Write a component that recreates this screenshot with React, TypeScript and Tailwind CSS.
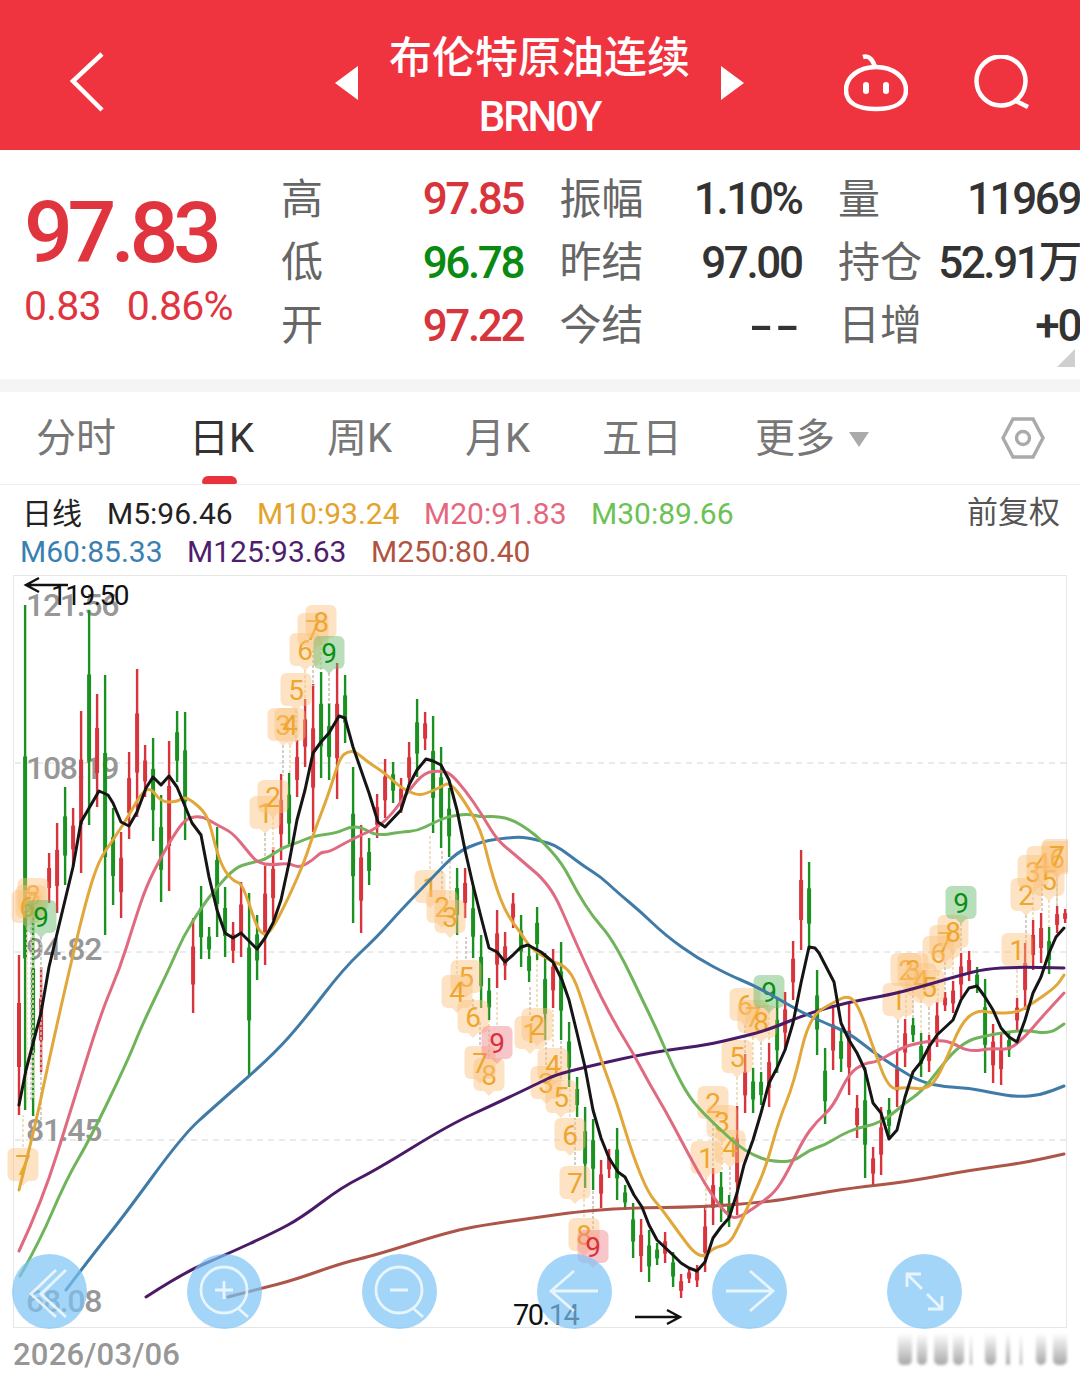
const raw = `g605-1110 g905-1116 r967-1072 r853-903 r823-913 g787-885 r808-867 r711-873 g610-825 r694-807 g675-935 g808-905 r832-918 r752-839 r669-817 r745-797 g738-841 g795-902 r741-891 g711-782 g712-840 r918-1013 g886-959 g927-959 g827-937 g887-957 r922-963 r882-957 g893-1075 g915-980 r863-965 r847-920 r774-860 g773-845 r740-797 r699-767 r684-832 g672-778 g703-780 r663-799 g675-743 g767-923 r825-933 g838-885 r794-838 r759-818 g762-803 r778-813 r742-793 g699-777 r712-750 g716-833 g747-848 g788-857 g868-935 r868-918 g887-958 g935-1008 g978-1020 r910-988 r932-980 r893-928 g915-967 g945-982 g907-960 g953-1040 r949-1008 g942-1040 g1022-1087 g1077-1117 g1107-1188 g1119-1190 r1160-1208 r1149-1178 g1128-1200 g1185-1210 g1203-1258 r1219-1272 g1230-1282 g1243-1265 r1232-1263 g1252-1287 r1274-1298 r1268-1283 r1265-1287 r1207-1272 r1168-1225 g1172-1222 g1195-1227 r1106-1215 r1054-1113 g1068-1113 g1072-1105 r1043-1107 g997-1073 r992-1050 r941-1000 r850-950 g862-950 g970-1055 g1048-1124 r1005-1070 g1028-1072 r1003-1095 r1095-1138 g1067-1178 r1147-1185 r1107-1175 g1098-1138 r1052-1107 r1019-1067 g1018-1042 g1033-1077 r1035-1072 r1002-1047 r992-1011 r981-1013 r953-998 r951-981 g967-993 g979-1073 r1024-1083 r1032-1085 g1033-1057 r998-1030 r943-1010 r920-970 r913-963 g927-974 r906-933 r909-923`;

const candles = raw.split(" ").map((s, i) => {
  const [a, b] = s.slice(1).split("-").map(Number);
  return { x: 24.1 + i * 8, up: s[0] === "r", top: a, bottom: b };
});
candles.unshift({ x: 18, up: true, top: 955, bottom: 1115 });

const lines: { color: string; d: string }[] = [
  { color: "#ac5548", d: "227,1297 262,1288 293,1280 341,1263 375,1255 444,1233 482,1225 540,1217 574,1212 624,1208 702,1207 767,1202 808,1195 850,1188 905,1182 970,1170 1022,1163 1063,1154" },
  { color: "#4a1a66", d: "145,1297 182,1273 224,1255 272,1233 300,1218 341,1187 375,1170 448,1125 496,1103 540,1082 554,1075 585,1067 633,1056 667,1050 705,1045 736,1038 767,1030 808,1013 848,1002 888,995 919,987 960,975 984,969 1016,967 1063,968" },
  { color: "#3f7ba6", d: "65,1290 93,1253 122,1217 182,1135 213,1107 272,1055 303,1020 343,968 376,937 400,910 432,877 456,852 480,842 496,839 516,837 528,838 540,841 554,845 568,855 584,867 600,877 616,892 640,912 664,935 696,958 728,975 752,985 776,998 800,1012 824,1023 848,1033 872,1052 896,1068 920,1082 944,1087 968,1088 992,1093 1016,1097 1040,1095 1063,1086" },
  { color: "#6fb45a", d: "19,1276 38,1243 65,1180 90,1137 127,1060 141,1025 169,967 182,937 200,908 216,887 234,868 248,863 264,860 280,848 296,843 312,836 336,833 348,827 360,827 376,836 400,832 416,831 432,823 448,816 468,814 480,817 496,816 512,820 528,830 540,840 561,863 576,892 592,917 608,935 624,963 640,997 656,1030 672,1067 688,1097 704,1115 720,1130 736,1145 752,1155 768,1161 792,1162 808,1150 824,1145 840,1135 856,1128 872,1125 888,1117 904,1103 920,1092 936,1072 952,1052 968,1040 984,1036 1000,1033 1024,1030 1048,1034 1063,1024" },
  { color: "#e06a80", d: "18,1251 41,1202 72,1103 100,1013 119,968 133,923 145,887 160,857 176,830 186,818 201,816 216,825 232,833 248,853 257,863 272,865 288,863 298,868 312,860 320,852 328,852 344,843 360,835 376,828 392,813 408,790 424,772 440,771 449,773 464,790 480,813 496,840 512,853 528,867 540,877 554,895 568,927 584,963 600,997 616,1027 632,1053 648,1083 664,1110 680,1140 696,1170 712,1197 728,1217 738,1218 760,1203 774,1192 786,1173 802,1140 815,1122 832,1107 848,1073 864,1063 876,1062 896,1050 912,1044 936,1040 950,1042 968,1052 992,1048 1008,1050 1024,1037 1040,1018 1063,993" },
  { color: "#e2a73a", d: "18,1190 34,1127 48,1060 69,967 86,897 98,860 112,840 127,817 141,792 150,788 160,802 176,802 184,796 200,808 208,820 216,853 224,872 234,882 240,883 248,903 256,928 264,936 272,928 288,897 304,860 312,835 328,793 339,757 348,751 355,752 368,763 384,773 400,788 416,795 424,794 440,787 449,782 464,802 480,830 488,863 496,890 504,910 512,923 520,933 527,945 540,955 552,962 562,965 573,977 584,1010 600,1060 616,1103 631,1153 647,1193 660,1208 678,1233 693,1253 704,1257 712,1248 728,1244 736,1230 750,1200 764,1170 778,1120 793,1083 808,1017 833,1002 848,995 858,1007 872,1047 888,1090 904,1087 929,1090 944,1063 960,1023 976,1010 992,1013 1016,1013 1032,1003 1055,987 1063,975" },
  { color: "#151515", d: "18,1105 25,1070 40,1013 48,967 72,867 80,822 98,791 107,795 112,803 120,822 128,826 136,812 145,788 152,777 160,785 168,776 176,787 191,823 200,835 208,877 216,910 224,933 232,938 240,933 256,949 264,938 272,923 280,900 288,863 296,820 304,790 312,753 320,742 328,733 338,716 344,718 352,747 360,770 368,793 377,822 384,827 400,810 408,785 416,770 425,759 432,761 440,765 448,780 456,810 464,850 472,885 480,917 488,948 496,952 504,962 512,955 520,947 527,945 540,952 552,962 561,980 568,1000 576,1033 584,1067 592,1110 600,1138 608,1158 617,1172 624,1177 633,1195 641,1207 648,1225 656,1240 672,1255 680,1263 688,1268 696,1271 704,1262 712,1238 720,1227 728,1218 736,1193 743,1165 752,1140 760,1113 768,1083 776,1068 784,1050 792,1023 800,983 808,947 814,948 818,953 833,982 840,1023 848,1040 856,1053 864,1070 872,1103 880,1113 888,1139 896,1130 904,1097 912,1072 920,1062 928,1047 936,1035 952,1020 960,1000 968,988 976,986 984,997 992,1010 1000,1028 1008,1037 1016,1042 1024,1020 1032,993 1040,977 1048,953 1055,937 1063,928" },
];

// rounds the corners of the averages, the black one stays angular like the app draws it
function smooth(d: string) {
  const p = d.split(" ").map(s => s.split(",").map(Number));
  let out = `M${p[0][0]} ${p[0][1]}`;
  for (let i = 1; i < p.length - 1; i++) {
    out += `Q${p[i][0]} ${p[i][1]} ${(p[i][0] + p[i + 1][0]) / 2} ${(p[i][1] + p[i + 1][1]) / 2}`;
  }
  const last = p[p.length - 1];
  return out + `L${last[0]} ${last[1]}`;
}

// x, y, label, end of the dotted stem
const marks: [number, number, string, number][] = [
  [32, 895, "8", 1100], [30, 902, "7", 1100], [26, 907, "6", 1100], [40, 917, "9", 1120], [22, 1165, "7", 1115],
  [264, 813, "1", 866], [272, 797, "2", 850], [282, 725, "3", 776], [289, 725, "4", 775], [295, 690, "5", 742], [304, 650, "6", 700], [312, 630, "7", 686], [320, 622, "8", 672], [328, 653, "9", 704],
  [429, 887, "1", 835], [441, 907, "2", 850], [449, 917, "3", 860], [465, 977, "5", 937], [456, 992, "4", 940], [472, 1017, "6", 1008], [488, 1075, "8", 1020], [479, 1063, "7", 1020], [496, 1043, "9", 990],
  [529, 1033, "1", 985], [536, 1025, "2", 960], [545, 1083, "3", 1040], [552, 1065, "4", 1010], [560, 1097, "5", 1040], [569, 1135, "6", 1088], [574, 1183, "7", 1118], [583, 1235, "8", 1190], [592, 1247, "9", 1190],
  [705, 1158, "1", 1210], [712, 1103, "2", 1168], [721, 1122, "3", 1172], [729, 1147, "4", 1195], [736, 1057, "5", 1106], [744, 1005, "6", 1054], [752, 1017, "7", 1068], [760, 1022, "8", 1072], [768, 992, "9", 1043],
  [897, 1000, "1", 1052], [905, 970, "2", 1019], [912, 970, "3", 1018], [920, 980, "4", 1033], [928, 987, "5", 1035], [937, 953, "6", 1002], [944, 942, "7", 992], [952, 932, "8", 981], [960, 903, "9", 953],
  [1016, 950, "1", 998], [1025, 895, "2", 943], [1032, 872, "3", 920], [1041, 863, "4", 913], [1048, 880, "5", 927], [1056, 858, "6", 906], [1056, 856, "7", 906],
];

const axis: [string, number][] = [["121.56", 616], ["108.19", 779], ["94.82", 960], ["81.45", 1141], ["68.08", 1312]];

const stats = [
  ["高", "97.85", "text-[#d8343c]", "振幅", "1.10%", "量", "11969"],
  ["低", "96.78", "text-[#0a8a12]", "昨结", "97.00", "持仓", "52.91万"],
  ["开", "97.22", "text-[#d8343c]", "今结", "--", "日增", "+0"],
];

const tabs = [
  { label: "分时", w: "w-[153px]" },
  { label: "日K", w: "w-[138px]", active: true },
  { label: "周K", w: "w-[138px]" },
  { label: "月K", w: "w-[137px]" },
  { label: "五日", w: "w-[153px]" },
];

const legend1 = [
  { t: "日线", c: "text-[#222] w-[85px]" },
  { t: "M5:96.46", c: "text-[#222] w-[150px]" },
  { t: "M10:93.24", c: "text-[#e4a32c] w-[167px]" },
  { t: "M20:91.83", c: "text-[#e4677e] w-[167px]" },
  { t: "M30:89.66", c: "text-[#6cc255] w-[167px]" },
];
const legend2 = [
  { t: "M60:85.33", c: "text-[#3a80b0] w-[167px]" },
  { t: "M125:93.63", c: "text-[#4f1d6c] w-[184px]" },
  { t: "M250:80.40", c: "text-[#b0533f] w-[184px]" },
];

const blurBars = ["w-[14px] ml-0", "w-[10px] ml-[5px]", "w-[14px] ml-[7px]", "w-[11px] ml-[5px]", "w-[2px] ml-[6px]", "w-[11px] ml-[13px]", "w-[4px] ml-[10px]", "w-[2px] ml-[10px]", "w-[10px] ml-[14px]", "w-[14px] ml-[7px]"];

function Chart() {
  return (
    <svg viewBox="13 576 1054 752" className="block h-[752px] w-[1054px] overflow-visible">
      <defs>
        <clipPath id="plot"><rect x="0" y="570" width="1067" height="760" /></clipPath>
      </defs>
      {[763, 952, 1140].map(y => (
        <line key={y} x1="14" x2="1066" y1={y} y2={y} stroke="#d6d6d6" strokeWidth="1" strokeDasharray="6 5" />
      ))}
      {axis.map(([t, y]) => (
        <text key={t} x="25" y={y} fill="#979797" fontSize="32" fontWeight="500" letterSpacing="-1.3">{t}</text>
      ))}
      {candles.map((c, i) => {
        const h = c.bottom - c.top;
        const color = c.up ? "#d8343c" : "#1a9121";
        return (
          <g key={i}>
            <rect x={c.x - 1.2} y={c.top} width="2.4" height={h} fill={color} />
            <rect x={c.x - 2} y={c.top + h * 0.3} width="4" height={h * 0.4} fill={color} />
          </g>
        );
      })}
      <g clipPath="url(#plot)">
        {marks.map(([x, y, , end], i) => (
          <line key={i} x1={x} x2={x} y1={y + (end > y ? 20 : -18)} y2={end} stroke={i % 2 ? "#c9c4bb" : "#ecd9b2"} strokeWidth="1.6" strokeDasharray="3 2" />
        ))}
        {marks.map(([x, y, label], i) => {
          const fill = label !== "9" ? "#fbc27c" : y > 1000 ? "#f07f88" : "#62b866";
          const ink = label !== "9" ? "#eea62e" : y > 1000 ? "#d9303a" : "#0a8f12";
          return (
            <g key={i}>
              <rect x={x - 15.5} y={y - 17} width="31" height="33" rx="6" fill={fill} fillOpacity="0.45" />
              <path d={`M${x - 5} ${y + 16}L${x} ${y + 21}L${x + 5} ${y + 16}Z`} fill={fill} fillOpacity="0.45" />
              <text x={x} y={y + 10} textAnchor="middle" fill={ink} fontSize="28">{label}</text>
            </g>
          );
        })}
      </g>
      {lines.map(l => (
        <path key={l.color} d={l.color === "#151515" ? "M" + l.d.replace(/ /g, "L") : smooth(l.d)} fill="none" stroke={l.color} strokeWidth="3" strokeLinejoin="round" strokeLinecap="round" />
      ))}
      <text x="50" y="605" fill="#111" fontSize="28" letterSpacing="-1.5">119.50</text>
      <path d="M67 585H25M38 578L25 585L38 592" fill="none" stroke="#111" strokeWidth="2.4" />
      <text x="512" y="1325" fill="#111" fontSize="29" letterSpacing="-1.5">70.14</text>
      <path d="M634 1317H679M666 1310L679 1317L666 1324" fill="none" stroke="#111" strokeWidth="2.4" />
    </svg>
  );
}

function RoundButton({ children }: { children: React.ReactNode }) {
  return (
    <div className="h-[75px] w-[75px] rounded-full bg-[#7cc3f5]/70">
      <svg viewBox="0 0 75 75" className="h-[75px] w-[75px]" fill="none" stroke="#fff" strokeOpacity="0.75" strokeWidth="2.8">
        {children}
      </svg>
    </div>
  );
}

export default function App() {
  return (
    <div className="flex h-[1375px] w-[1080px] flex-col overflow-hidden bg-white font-[Roboto,'Noto_Sans_CJK_SC',sans-serif]">
      {/* title bar */}
      <div className="flex h-[150px] items-center bg-[#f0343f] text-white">
        <svg viewBox="0 0 36 60" className="ml-[69px] mt-[14px] h-[60px] w-[36px]" fill="none" stroke="#fff" strokeWidth="4.5">
          <path d="M33 2L4 29L33 58" />
        </svg>
        <div className="ml-[230px] mt-[16px] h-0 w-0 border-y-[17px] border-r-[23px] border-y-transparent border-r-white" />
        <div className="flex w-[363px] flex-col items-center pt-[18px]">
          <div className="text-[43px] leading-[58px] font-medium">布伦特原油连续</div>
          <div className="mt-[8px] text-[42px] leading-[44px] font-medium tracking-[-2.2px]">BRN0Y</div>
        </div>
        <div className="mt-[16px] h-0 w-0 border-y-[17px] border-l-[23px] border-y-transparent border-l-white" />
        <svg viewBox="0 0 64 58" className="ml-[100px] mt-[16px] h-[58px] w-[64px]" fill="none" stroke="#fff" strokeWidth="4.5">
          <path d="M19 3C25 1 29 6 31 13" />
          <path d="M32 13C49 13 62 23 62 36C62 49 50 55 32 55C14 55 2 49 2 36C2 23 15 13 32 13Z" />
          <rect x="19" y="28" width="6" height="12" rx="3" fill="#fff" stroke="none" />
          <rect x="39" y="28" width="6" height="12" rx="3" fill="#fff" stroke="none" />
        </svg>
        <svg viewBox="0 0 56 54" className="ml-[66px] mt-[14px] h-[54px] w-[56px]" fill="none" stroke="#fff" strokeWidth="4.5">
          <circle cx="27" cy="26" r="24.5" />
          <path d="M40 45L54 52" />
        </svg>
      </div>

      {/* quote */}
      <div className="flex h-[230px]">
        <div className="w-[281px] pl-[24px] text-[#e0353f]">
          <div className="mt-[35px] text-[86px] leading-[96px] font-medium tracking-[-5.4px]">97.83</div>
          <div className="mt-[3px] flex gap-[26px] text-[41px] leading-[44px] tracking-[-0.8px]">
            <span>0.83</span>
            <span>0.86%</span>
          </div>
        </div>
        <div className="mt-[18px] grid h-[190px] w-[799px] grid-cols-[242px_242px_242px] grid-rows-3 gap-x-[36.5px]">
          {stats.map(r => (
            <div key={r[0]} className="contents">
              <div className="flex items-center justify-between">
                <span className="text-[42px] text-[#666]">{r[0]}</span>
                <span className={`text-[44px] font-medium tracking-[-2.4px] ${r[2]}`}>{r[1]}</span>
              </div>
              <div className="flex items-center justify-between">
                <span className="text-[42px] text-[#666]">{r[3]}</span>
                {r[4] === "--" ? (
                  <span className="origin-right scale-x-[1.6] text-[44px] font-medium tracking-[1.5px] text-[#333]">{r[4]}</span>
                ) : (
                  <span className="text-[44px] font-medium tracking-[-2.4px] text-[#333]">{r[4]}</span>
                )}
              </div>
              <div className="flex items-center justify-between">
                <span className="text-[42px] text-[#666]">{r[5]}</span>
                <span className="text-[44px] font-medium tracking-[-2.4px] whitespace-nowrap text-[#333]">{r[6]}</span>
              </div>
            </div>
          ))}
        </div>
      </div>
      <div className="-mt-[30px] ml-auto mr-[5px] h-0 w-0 border-b-[18px] border-l-[18px] border-b-[#cfcfcf] border-l-transparent" />
      <div className="mt-[12px] h-[13px] bg-[#f5f5f5]" />

      {/* period tabs */}
      <div className="flex h-[93px] items-stretch border-b border-[#eee] pl-[36px]">
        {tabs.map(t => (
          <div key={t.label} className={`${t.w} flex flex-col`}>
            <span className={`mt-[20px] h-[64px] text-[40px] leading-[54px] ${t.active ? "text-[#333]" : "text-[#777]"}`}>{t.label}</span>
            {t.active && <span className="ml-[13px] h-[8px] w-[35px] rounded-t-[6px] rounded-b-[2px] bg-[#e8323c]" />}
          </div>
        ))}
        <div className="mt-[20px] flex h-[54px] items-center gap-[14px] text-[40px] text-[#777]">
          更多
          <span className="h-0 w-0 border-x-[10px] border-t-[15px] border-x-transparent border-t-[#aaa]" />
        </div>
        <svg viewBox="0 0 44 42" className="ml-auto mr-[35px] mt-[25px] h-[42px] w-[44px]" fill="none" stroke="#aaa" strokeWidth="3.4">
          <path d="M12 2H32L42 21L32 40H12L2 21Z" />
          <circle cx="22" cy="21" r="6.5" />
        </svg>
      </div>

      {/* moving averages */}
      <div className="mt-[9px] flex h-[38px] items-center pl-[22px] pr-[20px] text-[30px]">
        {legend1.map(l => <span key={l.t} className={`shrink-0 ${l.c}`}>{l.t}</span>)}
        <span className="ml-auto text-[31px] text-[#555]">前复权</span>
      </div>
      <div className="flex h-[38px] items-center pl-[20px] text-[30px]">
        {legend2.map(l => <span key={l.t} className={`shrink-0 ${l.c}`}>{l.t}</span>)}
      </div>

      {/* chart */}
      <div className="relative mx-[13px] mt-[5px] h-[753px] border border-[#e6e6e6]">
        <Chart />
        <div className="absolute -bottom-[2px] -left-[2px] flex gap-[100px]">
          <RoundButton>
            <path d="M44 16L19 40L44 63M54 16L29 40L54 63" />
          </RoundButton>
          <RoundButton>
            <circle cx="37" cy="36" r="23" />
            <path d="M52 55L61 63M28 36H46M37 27V45" />
          </RoundButton>
          <RoundButton>
            <circle cx="37" cy="36" r="23" />
            <path d="M52 55L61 63M28 36H46" />
          </RoundButton>
          <RoundButton>
            <path d="M61 37H14M37 17L14 37L37 57" />
          </RoundButton>
          <RoundButton>
            <path d="M14 37H61M38 17L61 37L38 57" />
          </RoundButton>
          <RoundButton>
            <path d="M20 33V20H34M20 20L35 35M55 42V55H41M55 55L40 40" />
          </RoundButton>
        </div>
      </div>

      {/* date */}
      <div className="flex h-[47px] pl-[13px]">
        <span className="text-[31px] leading-[54px] font-medium tracking-[0.2px] text-[#979797]">2026/03/06</span>
        <div className="ml-auto mr-[13px] mt-[5px] flex h-[32px] items-stretch">
          {blurBars.map((c, i) => (
            <span key={i} className={`${c} rounded-b-[5px] bg-linear-to-b from-transparent to-[#a8a8a8] blur-[1.5px]`} />
          ))}
        </div>
      </div>
    </div>
  );
}
